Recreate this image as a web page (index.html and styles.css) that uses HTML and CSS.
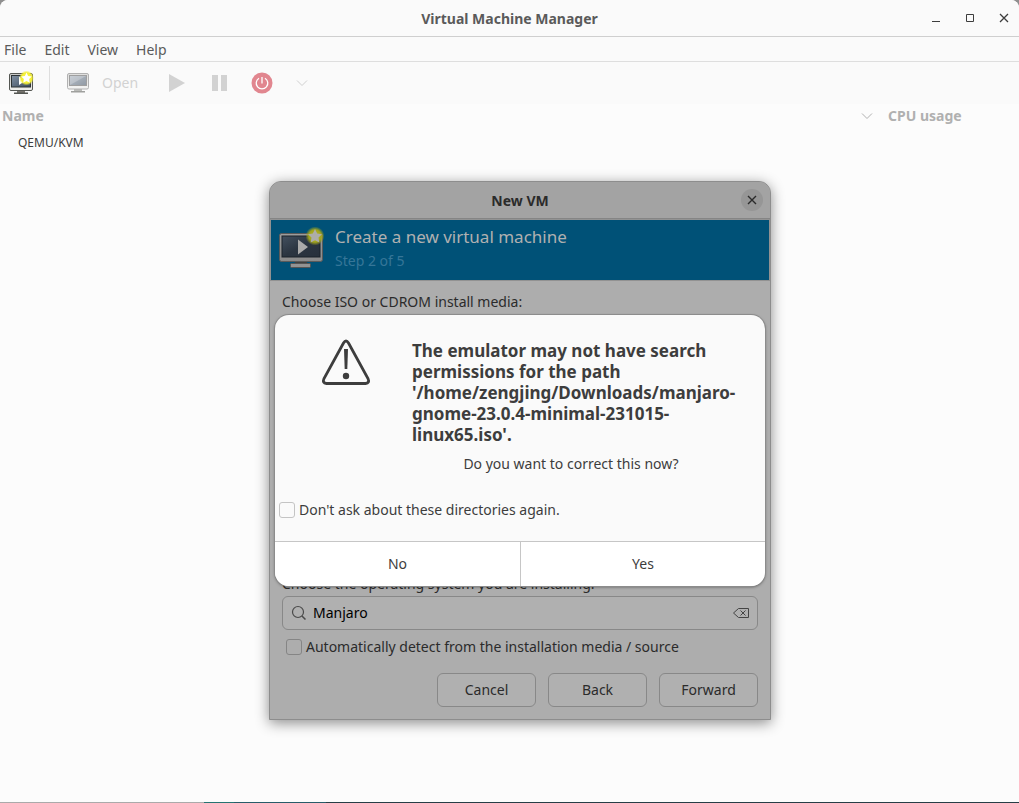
FILE: index.html
```html
<!DOCTYPE html>
<html lang="en">
<head>
<meta charset="utf-8">
<title>Virtual Machine Manager</title>
<link rel="stylesheet" href="styles.css">
</head>
<body>
<svg width="0" height="0" class="defs" aria-hidden="true">
  <defs>
    <linearGradient id="frame" x1="0" y1="0" x2="0" y2="1"><stop offset="0" stop-color="#c8c8c6"/><stop offset="1" stop-color="#f0f0ee"/></linearGradient>
    <linearGradient id="screen" x1="0" y1="0" x2="1" y2="1"><stop offset="0" stop-color="#8291a3"/><stop offset="1" stop-color="#3b4b5e"/></linearGradient>
    <linearGradient id="frame-dim" x1="0" y1="0" x2="0" y2="1"><stop offset="0" stop-color="#9d9d9d"/><stop offset="1" stop-color="#8a8a8a"/></linearGradient>
    <linearGradient id="screen-dim" x1="0" y1="0" x2="1" y2="1"><stop offset="0" stop-color="#43505f"/><stop offset=".5" stop-color="#2b3541"/><stop offset="1" stop-color="#27303b"/></linearGradient>
    <radialGradient id="glow"><stop offset="0" stop-color="#fdfb50"/><stop offset=".7" stop-color="#f3ee33"/><stop offset="1" stop-color="#f3ee33" stop-opacity="0"/></radialGradient>
    <radialGradient id="glow-dim"><stop offset="0" stop-color="#b5b52c"/><stop offset=".65" stop-color="#a1a41c"/><stop offset="1" stop-color="#a1a41c" stop-opacity="0"/></radialGradient>
  </defs>
</svg>
<div class="window">
  <header class="titlebar">
    <h1 class="title">Virtual Machine Manager</h1>
    <div class="controls">
      <button class="control" aria-label="Minimize"><svg width="10" height="10"><path d="M1 8.500h8" stroke="#3d3d3d"/></svg></button>
      <button class="control" aria-label="Maximize"><svg width="10" height="10"><path d="M1.500 1.500h7v7h-7z" fill="none" stroke="#3d3d3d"/></svg></button>
      <button class="control" aria-label="Close"><svg width="10" height="10"><path d="M1 1l8 8M9 1l-8 8" stroke="#3d3d3d" stroke-width="1.300"/></svg></button>
    </div>
  </header>
  <nav class="menubar">
    <button class="menu">File</button>
    <button class="menu">Edit</button>
    <button class="menu">View</button>
    <button class="menu">Help</button>
  </nav>
  <div class="toolbar">
    <button class="tool tool-new" aria-label="New virtual machine">
      <svg width="26" height="26">
        <path d="M9 20h8v3H9z" fill="#77756f"/><path d="M6 22.500h14v1.500H6z" fill="#555753"/>
        <rect x="1.500" y="3.500" width="23" height="17" rx="1.500" fill="url(#frame)" stroke="#555753"/>
        <rect x="3.500" y="5.500" width="19" height="11.500" fill="url(#screen)" stroke="#2e3436"/>
        <path d="M11 6.500l6 4.500-6 4z" fill="#fff"/>
        <circle cx="18.500" cy="8" r="7.500" fill="url(#glow)"/>
        <path d="M18.500 2.500l1.600 3.400 3.700.5-2.700 2.600.7 3.700-3.300-1.800-3.300 1.800.7-3.700-2.700-2.600 3.700-.5z" fill="#fff"/>
      </svg>
    </button>
    <span class="divider"></span>
    <button class="tool tool-open" disabled>
      <svg width="24" height="24" opacity=".55">
        <path d="M8 18h8v3H8z" fill="#888a85"/><path d="M5 20h14v1.500H5z" fill="#555753"/>
        <rect x="1.500" y="2.500" width="21" height="15.500" rx="1.500" fill="url(#frame)" stroke="#777"/>
        <rect x="3.500" y="4.500" width="17" height="10" fill="url(#screen)" stroke="#555"/>
        <path d="M4 5h16L4 14z" fill="#fff" opacity=".25"/>
      </svg>
      <span>Open</span>
    </button>
    <button class="tool tool-run" disabled aria-label="Run"><svg width="18" height="18"><path d="M1 0v18l16-9z" fill="#d2d2d2"/></svg></button>
    <button class="tool tool-pause" disabled aria-label="Pause"><svg width="18" height="18"><path d="M1 1h6v16H1zM10 1h6v16h-6z" fill="#d2d2d2"/></svg></button>
    <button class="tool tool-power" disabled aria-label="Shut down">
      <svg width="22" height="22"><circle cx="11" cy="11" r="10.500" fill="#e1868f"/><path d="M11 5v6.500M8 6.200a5.800 5.800 0 1 0 6 0" fill="none" stroke="#fff" stroke-width="1.300"/></svg>
    </button>
    <button class="tool" disabled aria-label="Shut down options"><svg width="12" height="8"><path d="M1 1.500l5 5 5-5" fill="none" stroke="#d0d0d0"/></svg></button>
  </div>
  <table class="machines">
    <thead>
      <tr>
        <th><div class="heading"><span>Name</span><svg width="12" height="8"><path d="M1 1.500l5 5 5-5" fill="none" stroke="#b0b0b0"/></svg></div></th>
        <th class="usage">CPU usage</th>
      </tr>
    </thead>
    <tbody><tr><td class="machine" colspan="2">QEMU/KVM</td></tr></tbody>
  </table>
  <div class="edge"></div>
</div>

<section class="dialog" aria-label="New VM">
  <header class="dialog-bar">
    <h2 class="title">New VM</h2>
    <button class="round-close" aria-label="Close"><svg width="10" height="10"><path d="M1 1l8 8M9 1l-8 8" stroke="#2b2b2b" stroke-width="1.400"/></svg></button>
  </header>
  <div class="banner">
    <svg width="48" height="44">
      <path d="M17 34h12v6H17z" fill="#3f4040"/>
      <rect x="12.500" y="36.500" width="20" height="4" rx="1" fill="#939393" stroke="#555"/>
      <rect x="1.500" y="6.500" width="43" height="28" rx="2" fill="url(#frame-dim)" stroke="#5b5a5a"/>
      <rect x="4" y="9" width="38" height="21" fill="url(#screen-dim)" stroke="#1b222b"/>
      <path d="M20 12.500l10 7.500-10 7.500z" fill="#aaa"/>
      <circle cx="37" cy="9" r="9.500" fill="url(#glow-dim)"/>
      <path d="M37 2l2.200 4.500 4.800.7-3.500 3.400.8 4.900-4.300-2.300-4.300 2.300.8-4.900L30 7.200l4.800-.7z" fill="#adada8"/>
    </svg>
    <div>
      <p class="banner-title">Create a new virtual machine</p>
      <p class="banner-step">Step 2 of 5</p>
    </div>
  </div>
  <form class="form">
    <p class="label">Choose ISO or CDROM install media:</p>
    <label class="label os-label" for="os">Choose the operating system you are installing:</label>
    <div class="search">
      <svg width="16" height="16"><circle cx="7" cy="7" r="5.500" fill="none" stroke="#4a4a4a" stroke-width="1.200"/><path d="M11 11l3.500 3.500" stroke="#4a4a4a" stroke-width="1.500"/></svg>
      <input id="os" class="search-input" type="text" value="Manjaro">
      <button type="button" class="clear" aria-label="Clear"><svg width="18" height="12"><path d="M6.500 1.500h10v9h-10L1.500 6zM8.500 3.500l5 5M13.500 3.500l-5 5" fill="none" stroke="#444"/></svg></button>
    </div>
    <label class="check"><input class="box" type="checkbox"><span>Automatically detect from the installation media / source</span></label>
    <div class="actions">
      <button type="button" class="action">Cancel</button>
      <button type="button" class="action">Back</button>
      <button type="button" class="action">Forward</button>
    </div>
  </form>
  <div class="alert" role="alertdialog" aria-labelledby="alert-title">
    <div class="alert-main">
      <svg class="warning" width="50" height="50"><path d="M22.500 4Q25 0 27.500 4L47 39.500Q49 44 44.500 44.500H5.500Q1 44 3 39.500z" fill="none" stroke="#3d3d3d" stroke-width="2.800"/><path d="M23 10h4l-.7 20h-2.600z" fill="#3d3d3d"/><circle cx="25" cy="37" r="3.200" fill="#3d3d3d"/></svg>
      <div class="message">
        <h3 id="alert-title" class="alert-title">The emulator may not have search<br>permissions for the path<br>'/home/zengjing/Downloads/manjaro-<br>gnome-23.0.4-minimal-231015-<br>linux65.iso'.</h3>
        <p class="question">Do you want to correct this now?</p>
      </div>
    </div>
    <label class="check alert-check"><input class="box" type="checkbox"><span>Don't ask about these directories again.</span></label>
    <div class="answers"><button class="answer">No</button><button class="answer">Yes</button></div>
  </div>
</section>
</body>
</html>
```

FILE: styles.css
```css
* { box-sizing: border-box; }

body {
  margin: 0;
  background: #8f8f8f;
  color: #3d3d3d;
  font: 14px/20px "Noto Sans", "Open Sans", sans-serif;
}

h1, h2, h3, p { margin: 0; }
button, input { font: inherit; color: inherit; }
button { padding: 0; border: 0; background: none; }
svg { display: block; flex: none; }
.defs { position: absolute; }

.window {
  display: flex;
  flex-direction: column;
  min-height: 100vh;
  overflow: hidden;
  border-radius: 8px 8px 0 0;
  background: #fcfcfc;
}

.titlebar {
  display: grid;
  grid-template-columns: 1fr auto 1fr;
  align-items: center;
  height: 37px;
  border-bottom: 1px solid #cfcfcf;
  background: #fafafa;
}

.title { grid-column: 2; padding-top: 2px; font-size: 14px; line-height: 20px; }
.titlebar .title { color: #5a5a5a; }
.controls { display: flex; justify-content: flex-end; gap: 10px; padding-right: 3px; }
.control { display: grid; place-items: center; width: 24px; height: 24px; }

.menubar {
  display: flex;
  gap: 18px;
  height: 25px;
  padding: 2px 4px 0;
  border-bottom: 1px solid #dedede;
  background: #fafafa;
  color: #5a5a5a;
}

.toolbar {
  display: flex;
  align-items: center;
  height: 42px;
  padding: 0 8px;
  background: #fafafa;
}

.tool { display: flex; align-items: center; }
.divider { width: 1px; height: 34px; margin: 0 16px 0 15px; background: #dedede; }
.tool-open { gap: 12px; margin-right: 30px; color: #d2d2d2; }
.tool-run { margin-right: 25px; }
.tool-pause { margin-right: 22px; }
.tool-power { margin-right: 23px; }

.machines { width: 100%; border-collapse: collapse; }
.machines th { height: 24px; padding: 0; text-align: left; color: #b0b0b0; }
.heading { display: flex; align-items: center; justify-content: space-between; padding: 0 7px 0 2px; }
.machines .usage { width: 139px; padding-left: 8px; }
.machine { height: 28px; padding: 2px 0 0 18px; font-size: 12px; }

.edge {
  height: 1px;
  margin-top: auto;
  background: linear-gradient(90deg, #aaa 0 20%, #267371 20% 23%, #285c69 23% 32%, #273e46 32%);
}

.dialog {
  position: absolute;
  top: 181px;
  left: 269px;
  width: 502px;
  border: 1px solid #8d8d8d;
  border-radius: 12px 12px 0 0;
  background: #adadad;
  box-shadow: 0 3px 14px rgb(0 0 0 / 45%);
  color: #2b2b2b;
}

.dialog-bar {
  display: grid;
  grid-template-columns: 1fr auto 1fr;
  align-items: center;
  height: 37px;
  border-bottom: 1px solid #858585;
  border-radius: 11px 11px 0 0;
  background: #a3a3a3;
}

.round-close {
  display: grid;
  place-items: center;
  justify-self: end;
  width: 22px;
  height: 22px;
  margin-right: 7px;
  border-radius: 50%;
  background: #969696;
}

.banner {
  display: flex;
  align-items: center;
  gap: 9px;
  height: 62px;
  padding: 0 7px 2px;
  border: 1px solid #929292;
  background: #005177;
}

.banner-title { color: #b0b0b0; font-size: 17px; line-height: 24px; }
.banner-step { color: #367698; line-height: 24px; }

.form { display: flex; flex-direction: column; padding: 11px 12px 12px; }
.label { display: block; }
.os-label { margin: 262px 0 2px; }

.search {
  display: flex;
  align-items: center;
  gap: 6px;
  height: 34px;
  padding: 0 7px 0 8px;
  border: 1px solid #888;
  border-radius: 6px;
  background: #b0b0b0;
}

.search-input { flex: 1; min-width: 0; padding: 0; border: 0; outline: 0; background: none; color: #000; }
.check { display: flex; align-items: center; gap: 4px; height: 20px; }
.form .check { margin-top: 7px; padding-left: 4px; }

.box {
  appearance: none;
  flex: none;
  width: 16px;
  height: 16px;
  margin: 0;
  border: 1px solid #858585;
  border-radius: 3px;
}

.actions { display: flex; justify-content: flex-end; gap: 12px; margin-top: 16px; }
.action { width: 99px; height: 34px; border: 1px solid #888; border-radius: 6px; background: #b0b0b0; }

.alert {
  position: absolute;
  top: 133px;
  left: 5px;
  right: 5px;
  overflow: hidden;
  border-radius: 14px;
  background: #fafafa;
  box-shadow: 0 0 0 1px #8c8c8c, 0 1px 3px rgb(0 0 0 / 50%);
  color: #3d3d3d;
}

.alert-main { display: flex; gap: 41px; padding: 24px 35px 0 46px; }
.message { flex: 1; min-width: 0; }
.alert-title { padding-top: 1px; font-size: 17px; line-height: 21px; white-space: nowrap; }
.question { margin-top: 9px; text-align: center; }
.alert-check { margin: 26px 0 21px; padding-left: 4px; }
.alert .box { border-color: #c4c4c4; }
.answers { display: grid; grid-template-columns: 1fr 1fr; height: 45px; border-top: 1px solid #c6c6c6; background: #fff; }
.answer + .answer { border-left: 1px solid #c6c6c6; }
```
